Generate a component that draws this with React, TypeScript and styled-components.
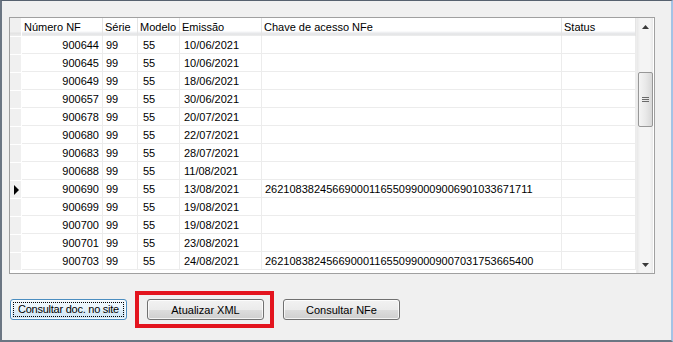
import { Fragment } from "react";
import styled, { createGlobalStyle } from "styled-components";

const GlobalStyle = createGlobalStyle`
  html, body {
    margin: 0;
    padding: 0;
    background: #f0f0f0;
  }
  * {
    box-sizing: border-box;
  }
`;

const Window = styled.div`
  width: 673px;
  height: 342px;
  background: #f0f0f0;
  border-top: 1px solid #56616f;
  border-left: 2px solid #6b7683;
  border-bottom: 2px solid #6b7683;
  border-right: 2px solid #a3c3e5;
  padding: 16px 0 0 7px;
  font-family: "Liberation Sans", Arial, sans-serif;
  font-size: 11px;
  color: #000;
  display: flex;
  flex-direction: column;
`;

const Grid = styled.div`
  width: 646px;
  height: 257px;
  border: 1px solid #a0a0a0;
  background: #fff;
  display: flex;
  overflow: hidden;
`;

const Table = styled.div`
  width: 626px;
  display: grid;
  grid-template-columns: 12px 81px 35px 42px 82px 300px 74px;
  grid-auto-rows: 18px;
  align-content: start;
`;

const HeadCell = styled.div<{ $indicator?: boolean }>`
  height: 18px;
  padding: 3px 0 0 2px;
  white-space: nowrap;
  overflow: hidden;
  border-right: 1px solid ${(p) => (p.$indicator ? "#ffffff" : "#e4e4e4")};
  background: ${(p) =>
    p.$indicator
      ? "linear-gradient(#f0f0f0, #f0f0f0 14px, #e2e2e2 15px, #ededed)"
      : "linear-gradient(#ffffff, #ffffff 13px, #f3f4f6 14px, #e3e4e6 16px, #eeeeee)"};
`;

const Indicator = styled.div`
  height: 18px;
  background: #f0f0f0;
  border-top: 1px solid #ffffff;
  border-right: 1px solid #ffffff;
  display: flex;
  align-items: center;
  padding-left: 4px;
`;

const Arrow = styled.span`
  width: 0;
  height: 0;
  border-top: 5px solid transparent;
  border-bottom: 5px solid transparent;
  border-left: 5px solid #000;
`;

const Cell = styled.div<{ $right?: boolean; $pad?: number }>`
  height: 18px;
  border-right: 1px solid #ececec;
  border-bottom: 1px solid #ececec;
  padding: 3px ${(p) => (p.$right ? "3px" : "0")} 0 ${(p) => p.$pad ?? 3}px;
  text-align: ${(p) => (p.$right ? "right" : "left")};
  white-space: nowrap;
  overflow: hidden;
`;

const ScrollBar = styled.div`
  width: 17px;
  height: 100%;
  background: linear-gradient(90deg, #e8e8e8, #f4f4f4 3px, #f4f4f4 13px, #e8e8e8);
  border-left: 1px solid #ededed;
  display: flex;
  flex-direction: column;
  align-items: center;
`;

const ArrowBox = styled.div`
  height: 17px;
  width: 100%;
  display: flex;
  align-items: center;
  justify-content: center;
`;

const Thumb = styled.div`
  margin-top: 37px;
  width: 15px;
  height: 55px;
  border: 1px solid #979797;
  border-radius: 2px;
  background: linear-gradient(90deg, #f4f4f4, #e9e9e9 50%, #d8d8d8);
  display: flex;
  align-items: center;
  justify-content: center;
`;

const Spacer = styled.div`
  flex: 1;
`;

const ButtonRow = styled.div`
  display: flex;
  align-items: center;
  margin-top: 17px;
  padding-left: 1px;
`;

const Button = styled.button<{ $focused?: boolean }>`
  width: 117px;
  height: 21px;
  font-family: "Liberation Sans", Arial, sans-serif;
  font-size: 11px;
  color: #000;
  padding: 0;
  white-space: nowrap;
  border-radius: 3px;
  border: 1px solid ${(p) => (p.$focused ? "#4b8dc0" : "#707070")};
  background: ${(p) =>
    p.$focused
      ? "linear-gradient(#f3f9fd, #e8f3fb 50%, #dcedf8 51%, #d0e6f5)"
      : "linear-gradient(#f2f2f2, #ebebeb 50%, #dddddd 51%, #cfcfcf)"};
  box-shadow: inset 0 0 0 1px rgba(255, 255, 255, 0.75);
  position: relative;
`;

const FocusRing = styled.span`
  position: absolute;
  inset: 2px;
  border: 1px dotted #000;
  display: flex;
  align-items: center;
  justify-content: center;
  letter-spacing: -0.25px;
  line-height: 1;
`;

const Highlight = styled.div`
  margin-left: 8px;
  margin-right: 9px;
  border: 4px solid #e3141e;
  padding: 4px 6px 4px 8px;
  display: flex;
`;

const rows: { nf: string; data: string; chave?: string; current?: boolean }[] = [
  { nf: "900644", data: "10/06/2021" },
  { nf: "900645", data: "10/06/2021" },
  { nf: "900649", data: "18/06/2021" },
  { nf: "900657", data: "30/06/2021" },
  { nf: "900678", data: "20/07/2021" },
  { nf: "900680", data: "22/07/2021" },
  { nf: "900683", data: "28/07/2021" },
  { nf: "900688", data: "11/08/2021" },
  {
    nf: "900690",
    data: "13/08/2021",
    chave: "26210838245669000116550990009006901033671711",
    current: true,
  },
  { nf: "900699", data: "19/08/2021" },
  { nf: "900700", data: "19/08/2021" },
  { nf: "900701", data: "23/08/2021" },
  {
    nf: "900703",
    data: "24/08/2021",
    chave: "26210838245669000116550990009007031753665400",
  },
];

const headers = ["Número NF", "Série", "Modelo", "Emissão", "Chave de acesso NFe", "Status"];

export default function App() {
  return (
    <>
      <GlobalStyle />
      <Window>
        <Grid>
          <Table>
            <HeadCell $indicator />
            {headers.map((h) => (
              <HeadCell key={h}>{h}</HeadCell>
            ))}
            {rows.map((r) => (
              <Fragment key={r.nf}>
                <Indicator>{r.current && <Arrow />}</Indicator>
                <Cell $right>{r.nf}</Cell>
                <Cell>99</Cell>
                <Cell $pad={5}>55</Cell>
                <Cell $pad={4}>{r.data}</Cell>
                <Cell $pad={3}>{r.chave}</Cell>
                <Cell />
              </Fragment>
            ))}
          </Table>
          <ScrollBar>
            <ArrowBox>
              <svg width="7" height="4" viewBox="0 0 7 4">
                <path d="M0 4 L3.5 0 L7 4 Z" fill="#3a3a3a" />
              </svg>
            </ArrowBox>
            <Thumb>
              <svg width="7" height="6" viewBox="0 0 7 6">
                <path d="M0 0.5H7M0 2.5H7M0 4.5H7" stroke="#6a6a6a" strokeWidth="1" />
              </svg>
            </Thumb>
            <Spacer />
            <ArrowBox>
              <svg width="7" height="4" viewBox="0 0 7 4">
                <path d="M0 0 L7 0 L3.5 4 Z" fill="#3a3a3a" />
              </svg>
            </ArrowBox>
          </ScrollBar>
        </Grid>
        <ButtonRow>
          <Button $focused>
            <FocusRing>Consultar doc. no site</FocusRing>
          </Button>
          <Highlight>
            <Button>Atualizar XML</Button>
          </Highlight>
          <Button>Consultar NFe</Button>
        </ButtonRow>
      </Window>
    </>
  );
}
